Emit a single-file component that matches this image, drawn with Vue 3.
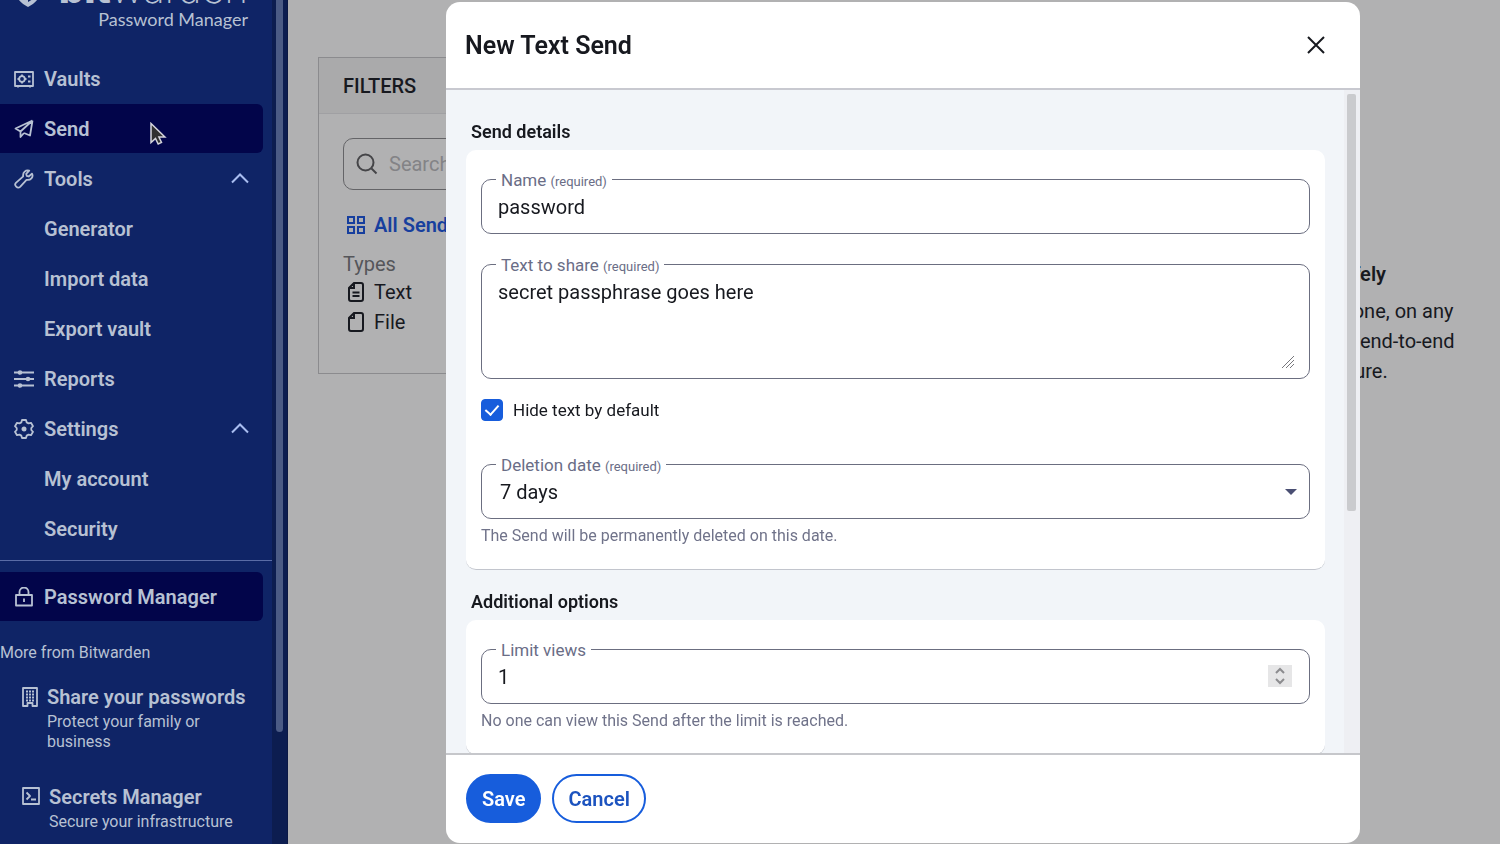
<script setup>
import { ref } from 'vue'

const navItems = [
  { label: 'Vaults', icon: 'vault' },
  { label: 'Send', icon: 'send', active: true },
  { label: 'Tools', icon: 'wrench', open: true },
  { label: 'Generator' },
  { label: 'Import data' },
  { label: 'Export vault' },
  { label: 'Reports', icon: 'sliders' },
  { label: 'Settings', icon: 'gear', open: true },
  { label: 'My account' },
  { label: 'Security' },
]

const search = ref('')
const name = ref('password')
const text = ref('secret passphrase goes here')
const hideText = ref(true)
const deletionDate = ref('7')
const limitViews = ref(1)
</script>

<template>
  <div class="app">
    <aside class="sidebar">
      <nav class="nav">
        <div class="brand">
          <div class="brand_row">
            <svg class="brand_shield" width="26" height="32" viewBox="0 0 26 32">
              <path d="M1 0h24v17c0 7-6 12-12 15C7 29 1 24 1 17z" fill="currentColor" />
              <path d="M13 4h8v13c0 5-4 8-8 10z" fill="#0f2466" />
            </svg>
            <span class="brand_name"><b>bit</b>warden</span>
          </div>
          <span class="brand_product">Password Manager</span>
        </div>

        <a
          v-for="item in navItems"
          :key="item.label"
          href="#"
          class="nav_item"
          :class="{ active: item.active }"
        >
          <span class="nav_icon">
            <svg v-if="item.icon === 'vault'" width="20" height="20" viewBox="0 0 20 20">
              <path d="M1 3h18v14H1zM4 17v1.500M16 17v1.500" />
              <circle cx="8" cy="10" r="2.800" />
              <path d="M8 5.500v1.700M8 12.800v1.700M3.500 10h1.700M10.800 10h1.700M14 7.500h2.500M14 12.500h2.500" />
            </svg>
            <svg v-else-if="item.icon === 'send'" width="20" height="20" viewBox="0 0 20 20">
              <path d="M18.500 1.500L1.500 9.500l5 3M18.500 1.500L16 16.500l-6-2.500M18.500 1.500l-12 11V18l3.500-4" />
            </svg>
            <svg v-else-if="item.icon === 'wrench'" width="20" height="20" viewBox="0 0 20 20">
              <path d="M18 4.600l-3.300 2.900-2-.6-.5-2 3-3.200c-3.400-1-6.700 1.700-6 5.600L1.900 13.800c-2.200 2.500 1.600 6.400 4.200 4l6.400-7c4 .9 7.300-2.700 5.500-6.200z" />
            </svg>
            <svg v-else-if="item.icon === 'sliders'" width="20" height="20" viewBox="0 0 20 20">
              <path d="M0 3.500h20M0 10h20M0 16.500h20" />
              <circle cx="6" cy="3.500" r="1.400" fill="currentColor" />
              <circle cx="14" cy="10" r="1.400" fill="currentColor" />
              <circle cx="6" cy="16.500" r="1.400" fill="currentColor" />
            </svg>
            <svg v-else-if="item.icon === 'gear'" width="20" height="20" viewBox="0 0 20 20">
              <path d="M8 1h4l.7 2.400 1.800 1 2.500-.6 2 3.400-1.700 1.800v2L19 12.800l-2 3.400-2.500-.6-1.800 1L12 19H8l-.7-2.400-1.800-1-2.500.6-2-3.400L2.700 11V9L1 7.200l2-3.400 2.500.6 1.800-1z" />
              <circle cx="10" cy="10" r="1.600" fill="currentColor" />
            </svg>
          </span>
          <span class="nav_label">{{ item.label }}</span>
          <svg v-if="item.open" class="chevron" width="18" height="11" viewBox="0 0 18 11">
            <path d="M1 9.500l8-8 8 8" />
          </svg>
        </a>

        <hr class="divider" />

        <a href="#" class="nav_item active">
          <span class="nav_icon">
            <svg width="20" height="20" viewBox="0 0 20 20">
              <path d="M2 8h16v10.500H2zM5.500 8V5a4.500 4.500 0 0 1 9 0v3M10 11.500v3.500" />
            </svg>
          </span>
          <span class="nav_label">Password Manager</span>
        </a>

        <p class="more">More from Bitwarden</p>

        <a href="#" class="product">
          <svg width="16" height="20" viewBox="0 0 16 20">
            <path d="M1 1h14v18h-4.500v-3h-5v3H1z" />
            <path d="M4 4.500h2M7 4.500h2M10 4.500h2M4 7.500h2M7 7.500h2M10 7.500h2M4 10.500h2M7 10.500h2M10 10.500h2M4 13.500h2M7 13.500h2M10 13.500h2" />
          </svg>
          <span>
            <strong>Share your passwords</strong>
            <small>Protect your family or business</small>
          </span>
        </a>
        <a href="#" class="product">
          <svg width="18" height="18" viewBox="0 0 18 18">
            <path d="M1 1h16v16H1zM4.500 5.500L8 9l-3.500 3.500M9 12.500h5" />
          </svg>
          <span>
            <strong>Secrets Manager</strong>
            <small>Secure your infrastructure</small>
          </span>
        </a>
      </nav>
      <div class="sidebar_scroll"><div class="sidebar_thumb"></div></div>
      <svg class="cursor" width="18" height="24" viewBox="0 0 18 24">
        <path d="M2 1.500v19l4.500-4 2.700 5.500 3.300-1.500-2.600-5.500h6z" fill="#303030" stroke="#d5d5dc" stroke-width="1.500" />
      </svg>
    </aside>

    <main class="main">
      <section class="filters">
        <h2>Filters</h2>
        <div class="filters_body">
          <div class="search">
            <svg width="22" height="22" viewBox="0 0 22 22">
              <circle cx="9.500" cy="9.500" r="8" />
              <path d="M15.500 15.500l5 5" />
            </svg>
            <input v-model="search" type="search" placeholder="Search Sends" aria-label="Search Sends" />
          </div>
          <a href="#" class="filter all">
            <svg width="20" height="20" viewBox="0 0 20 20">
              <path d="M2 2h6v6H2zM12 2h6v6h-6zM2 12h6v6H2zM12 12h6v6h-6z" />
            </svg>
            All Sends
          </a>
          <h3>Types</h3>
          <a href="#" class="filter">
            <svg width="20" height="20" viewBox="0 0 20 20">
              <path d="M8 1h7a2 2 0 0 1 2 2v14a2 2 0 0 1-2 2H5a2 2 0 0 1-2-2V6zM8 1v5H3M6.500 10.500h7M6.500 14h7" />
            </svg>
            Text
          </a>
          <a href="#" class="filter">
            <svg width="20" height="20" viewBox="0 0 20 20">
              <path d="M8 1h7a2 2 0 0 1 2 2v14a2 2 0 0 1-2 2H5a2 2 0 0 1-2-2V6zM8 1v5H3" />
            </svg>
            File
          </a>
        </div>
      </section>

      <section class="empty">
        <h2>Send sensitive information safely</h2>
        <p>
          Share files and data securely with anyone, on any<br />
          platform. Your information will remain end-to-end<br />
          encrypted while limiting exposure.
        </p>
      </section>
    </main>

    <div class="overlay">
      <form class="dialog" role="dialog" aria-labelledby="dialog-title" @submit.prevent>
        <header class="dialog_header">
          <h1 id="dialog-title">New Text Send</h1>
          <button type="button" class="close" aria-label="Close">
            <svg width="18" height="18" viewBox="0 0 18 18"><path d="M1 1l16 16M17 1L1 17" /></svg>
          </button>
        </header>

        <div class="dialog_body">
          <div class="dialog_content">
            <h2>Send details</h2>
            <div class="card">
              <div class="field">
                <label for="name">Name <small>(required)</small></label>
                <input id="name" v-model="name" type="text" />
              </div>
              <div class="field">
                <label for="text">Text to share <small>(required)</small></label>
                <textarea id="text" v-model="text"></textarea>
                <svg class="grip" width="14" height="14" viewBox="0 0 14 14">
                  <path d="M1 13L13 1M5 13l8-8M9 13l4-4" />
                </svg>
              </div>
              <div class="check">
                <input id="hide" v-model="hideText" type="checkbox" />
                <label for="hide">Hide text by default</label>
              </div>
              <div class="field">
                <label for="date">Deletion date <small>(required)</small></label>
                <select id="date" v-model="deletionDate">
                  <option value="1">1 day</option>
                  <option value="7">7 days</option>
                  <option value="30">30 days</option>
                </select>
                <svg class="caret" width="12" height="6" viewBox="0 0 12 6"><path d="M0 0h12L6 6z" /></svg>
              </div>
              <p class="hint">The Send will be permanently deleted on this date.</p>
            </div>

            <h2>Additional options</h2>
            <div class="card">
              <div class="field">
                <label for="views">Limit views</label>
                <input id="views" v-model="limitViews" type="number" min="1" />
                <svg class="spinner" width="24" height="22" viewBox="0 0 24 22">
                  <path d="M8 8l4-4 4 4M8 14l4 4 4-4" />
                </svg>
              </div>
              <p class="hint">No one can view this Send after the limit is reached.</p>
            </div>
          </div>
          <div class="dialog_scroll"><div class="dialog_thumb"></div></div>
        </div>

        <footer class="dialog_footer">
          <button type="submit" class="btn primary">Save</button>
          <button type="button" class="btn">Cancel</button>
        </footer>
      </form>
    </div>
  </div>
</template>

<style>
body {
  margin: 0;
  overflow: hidden;
}
</style>

<style scoped>
.app {
  display: flex;
  height: 100vh;
  overflow: hidden;
  background: #b1b1b2;
  color: #17191f;
  font-family: Roboto, "Liberation Sans", sans-serif;
  font-size: 20px;
}
* {
  box-sizing: border-box;
}
h1, h2, h3, p {
  margin: 0;
}
a {
  color: inherit;
  text-decoration: none;
}
svg {
  flex: none;
  fill: none;
  stroke: currentColor;
  stroke-width: 2;
}
input, textarea, select, button {
  font: inherit;
  color: inherit;
}

/* sidebar */
.sidebar {
  position: relative;
  display: flex;
  flex: none;
  width: 288px;
  overflow: hidden;
  background: #0f2466;
  color: #b7c1d3;
}
.nav {
  flex: 1;
  min-width: 0;
}
.brand {
  display: flex;
  flex-direction: column;
  justify-content: flex-end;
  align-items: flex-end;
  height: 54px;
  padding: 0 24px 23px 16px;
}
.brand_row {
  display: flex;
  align-items: flex-end;
  gap: 18px;
}
.brand_shield {
  stroke: none;
}
.brand_name {
  font-family: Inter, sans-serif;
  font-size: 40px;
  font-weight: 200;
  line-height: 36px;
}
.brand_name b {
  font-weight: 800;
}
.brand_product {
  font-family: Lato, sans-serif;
  font-size: 18px;
  line-height: 24px;
}
.nav_item {
  display: flex;
  align-items: center;
  height: 49px;
  margin: 0 9px 1px 0;
  padding: 0 14px;
  border-radius: 0 6px 6px 0;
  font-weight: 600;
}
.nav_item.active {
  background: #02054a;
}
.nav_icon {
  display: flex;
  width: 30px;
}
.nav_icon svg,
.product svg {
  stroke-width: 1.8px;
  stroke-linejoin: round;
}
.nav_label {
  flex: 1;
}
.chevron {
  color: #a9bdf0;
}
.divider {
  height: 1px;
  margin: 7px 0 11px;
  border: 0;
  background: #5a6ca6;
}
.more {
  margin-top: 22px;
  font-size: 16px;
  line-height: 20px;
}
.product {
  display: flex;
  gap: 9px;
  height: 75px;
  margin: 22px 20px 0 22px;
}
.product + .product {
  margin-top: 25px;
}
.product svg {
  margin-top: 2px;
}
.product strong,
.product small {
  display: block;
}
.product strong {
  font-weight: 600;
  line-height: 24px;
  white-space: nowrap;
}
.product small {
  margin-top: 3px;
  font-size: 16px;
  line-height: 20px;
}
.sidebar_scroll {
  width: 16px;
  padding: 0 4px;
  border-right: 1px solid #0b1844;
  background: #0c1d50;
}
.sidebar_thumb {
  height: 732px;
  border-radius: 0 0 4px 4px;
  background: #4b5b85;
}
.cursor {
  position: absolute;
  top: 122px;
  left: 149px;
}

/* page behind the dialog */
.main {
  display: grid;
  flex: 1;
  grid-template-columns: 7fr 5fr;
  gap: 24px;
  align-items: start;
  padding: 57px 28px 57px 30px;
}
.filters {
  border: 1px solid #8b8b8e;
}
.filters h2 {
  padding: 16px 24px 15px;
  border-bottom: 1px solid #a0a0a3;
  background: #aaaaab;
  font-size: 20px;
  font-weight: 500;
  line-height: 24px;
  text-transform: uppercase;
}
.filters_body {
  padding: 24px 24px 36px;
}
.search {
  display: flex;
  align-items: center;
  gap: 11px;
  height: 52px;
  margin-bottom: 20px;
  padding: 0 12px;
  border: 1px solid #646467;
  border-radius: 10px;
  color: #454548;
}
.search input {
  flex: 1;
  padding: 0;
  border: 0;
  background: none;
  outline: 0;
}
.search input::placeholder {
  color: #838386;
}
.filter {
  display: flex;
  align-items: center;
  gap: 8px;
  height: 30px;
  padding-left: 3px;
}
.filter.all {
  margin-bottom: 12px;
  color: #173f9e;
  font-weight: 600;
}
.filters h3 {
  color: #55565a;
  font-size: 20px;
  font-weight: 400;
  line-height: 25px;
}
.empty {
  margin-top: 202px;
  line-height: 30px;
  text-align: center;
  white-space: nowrap;
}
.empty h2 {
  margin-bottom: 7px;
  font-size: 20px;
  font-weight: 600;
}

/* dialog */
.overlay {
  position: fixed;
  inset: 0;
  display: flex;
  justify-content: center;
  padding: 2px 0 1px 306px;
}
.dialog {
  display: flex;
  flex-direction: column;
  width: 100%;
  max-width: 914px;
  overflow: hidden;
  border-radius: 14px;
  background: #fff;
}
.dialog_header {
  display: flex;
  align-items: center;
  justify-content: space-between;
  height: 88px;
  padding: 0 35px 0 19px;
  border-bottom: 2px solid #c8c9d0;
}
.dialog_header h1 {
  font-size: 25px;
  font-weight: 600;
}
.close {
  display: flex;
  padding: 0;
  border: 0;
  background: none;
}
.dialog_body {
  display: flex;
  flex: 1;
  min-height: 0;
  overflow: hidden;
  background: #f2f5f9;
}
.dialog_content {
  flex: 1;
  padding: 30px 19px 0 20px;
}
.dialog_content h2 {
  margin-bottom: 6px;
  padding-left: 5px;
  font-size: 18px;
  font-weight: 600;
  line-height: 24px;
}
.card {
  margin-bottom: 20px;
  padding: 29px 15px 22px;
  border-bottom: 1px solid #c2c5cd;
  border-radius: 10px;
  background: #fff;
}
.field {
  position: relative;
  display: flex;
}
.field + .field {
  margin-top: 30px;
}
.field label {
  position: absolute;
  top: -10px;
  left: 15px;
  padding: 0 5px;
  background: #fff;
  color: #6a6d86;
  font-size: 17px;
  line-height: 22px;
}
.field small {
  font-size: 13px;
}
.field input,
.field textarea,
.field select {
  width: 100%;
  height: 55px;
  margin: 0;
  padding: 0 16px;
  border: 1px solid #6b6e80;
  border-radius: 10px;
  outline: 0;
  background: #fff;
  appearance: none;
}
.field select {
  padding-left: 18px;
}
.field textarea {
  height: 115px;
  padding-top: 14px;
  line-height: 26px;
  resize: none;
}
.field input[type="number"] {
  appearance: textfield;
}
.grip,
.caret,
.spinner {
  position: absolute;
  pointer-events: none;
}
.grip {
  right: 15px;
  bottom: 10px;
  color: #77777c;
  stroke-width: 1px;
}
.caret {
  top: 25px;
  right: 13px;
  fill: #4a4f73;
  stroke: none;
}
.spinner {
  top: 16px;
  right: 18px;
  background: #e6e6e7;
  color: #8c8c8f;
}
.check {
  display: flex;
  align-items: center;
  gap: 10px;
  height: 24px;
  margin: 19px 0 42px;
  font-size: 17px;
}
.check input {
  display: grid;
  place-items: center;
  width: 22px;
  height: 22px;
  margin: 0;
  border: 1px solid #175ddc;
  border-radius: 4px;
  appearance: none;
}
.check input:checked {
  background: #175ddc;
}
.check input:checked::after {
  content: "";
  width: 6px;
  height: 11px;
  margin-bottom: 3px;
  border: solid #fff;
  border-width: 0 2px 2px 0;
  transform: rotate(42deg);
}
.hint {
  margin-top: 6px;
  color: #70738a;
  font-size: 16px;
  line-height: 22px;
}
.dialog_scroll {
  width: 16px;
  padding: 4px 4px 0 3px;
  background: #eeeff3;
}
.dialog_thumb {
  height: 417px;
  border-radius: 2px;
  background: #cacbce;
}
.dialog_footer {
  display: flex;
  gap: 11px;
  padding: 19px 20px 20px;
  border-top: 2px solid #c6c7cb;
}
.btn {
  height: 49px;
  padding: 0 14px;
  border: 2px solid #175ddc;
  border-radius: 25px;
  background: #fff;
  color: #1c53bf;
  font-weight: 600;
}
.btn.primary {
  background: #175ddc;
  color: #fff;
}
</style>
